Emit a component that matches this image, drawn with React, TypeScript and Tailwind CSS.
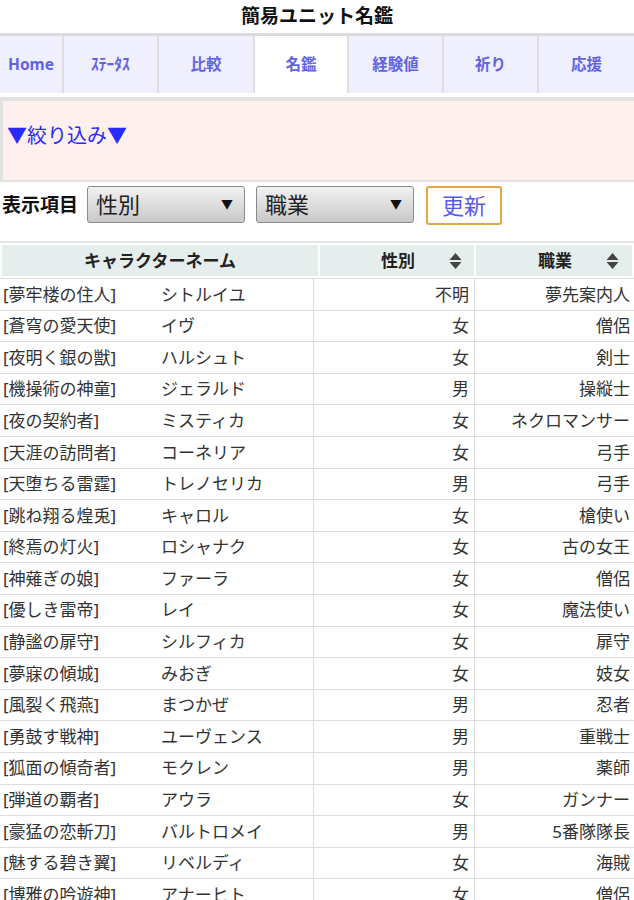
import React from "react";

const tabs = [
  { label: "Home", w: "w-[64px]" },
  { label: "ｽﾃｰﾀｽ", w: "w-[95px]" },
  { label: "比較", w: "w-[96px]" },
  { label: "名鑑", w: "w-[94px]", active: true },
  { label: "経験値", w: "w-[95px]" },
  { label: "祈り", w: "w-[95px]" },
  { label: "応援", w: "flex-1" },
];

const rows: [string, string, string, string][] = [
  ["[夢牢楼の住人]", "シトルイユ", "不明", "夢先案内人"],
  ["[蒼穹の愛天使]", "イヴ", "女", "僧侶"],
  ["[夜明く銀の獣]", "ハルシュト", "女", "剣士"],
  ["[機操術の神童]", "ジェラルド", "男", "操縦士"],
  ["[夜の契約者]", "ミスティカ", "女", "ネクロマンサー"],
  ["[天涯の訪問者]", "コーネリア", "女", "弓手"],
  ["[天堕ちる雷霆]", "トレノセリカ", "男", "弓手"],
  ["[跳ね翔る煌兎]", "キャロル", "女", "槍使い"],
  ["[終焉の灯火]", "ロシャナク", "女", "古の女王"],
  ["[神薙ぎの娘]", "ファーラ", "女", "僧侶"],
  ["[優しき雷帝]", "レイ", "女", "魔法使い"],
  ["[静謐の扉守]", "シルフィカ", "女", "扉守"],
  ["[夢寐の傾城]", "みおぎ", "女", "妓女"],
  ["[風裂く飛燕]", "まつかぜ", "男", "忍者"],
  ["[勇鼓す戦神]", "ユーヴェンス", "男", "重戦士"],
  ["[狐面の傾奇者]", "モクレン", "男", "薬師"],
  ["[弾道の覇者]", "アウラ", "女", "ガンナー"],
  ["[豪猛の恋斬刀]", "バルトロメイ", "男", "5番隊隊長"],
  ["[魅する碧き翼]", "リベルディ", "女", "海賊"],
  ["[博雅の吟遊神]", "アナーヒト", "女", "僧侶"],
];

const SortIcon = () => (
  <svg width="13" height="18" viewBox="0 0 13 18" className="shrink-0">
    <path d="M6.5 1 L12.5 8 L0.5 8 Z" fill="#444" />
    <path d="M6.5 17 L12.5 10 L0.5 10 Z" fill="#444" />
  </svg>
);

const Select = ({ value }: { value: string }) => (
  <div className="h-[37px] w-[158px] rounded-[3px] border border-[#8a8a8a] bg-gradient-to-b from-[#f2f2f2] to-[#c8c8c8] flex items-center justify-between pl-[8px] pr-[11px]">
    <span className="text-[22px] text-[#222]">{value}</span>
    <span className="text-[12px] text-[#111]">▼</span>
  </div>
);

export default function App() {
  return (
    <div className="w-[634px] bg-white font-['Noto_Sans','Noto_Sans_CJK_JP',sans-serif] text-[#222] overflow-hidden">
      <h1 className="h-[33px] flex items-center justify-center text-[19px] font-bold text-[#111]">
        簡易ユニット名鑑
      </h1>

      <nav className="flex border-t-[3px] border-[#dcdcdc] h-[64px] pb-[4px]">
        {tabs.map((t) => (
          <div
            key={t.label}
            className={`${t.w} flex items-center justify-center border-r-2 border-[#dedede] last:border-r-0 text-[15.5px] font-bold text-[#6262e6] ${
              t.active ? "bg-white" : "bg-[#efeffd]"
            }`}
          >
            {t.label}
          </div>
        ))}
      </nav>

      <div className="h-[85px] border-t-[4px] border-l-[3px] border-b-2 border-[#e2e2e2] bg-[#fff0f0] flex items-center pl-[4px] pb-[12px]">
        <span className="font-['Noto_Sans_CJK_JP',sans-serif] text-[20px] text-[#2a2aff]">▼絞り込み▼</span>
      </div>

      <div className="h-[61px] flex items-start pt-[4px] border-b-2 border-[#e4e4e4]">
        <span className="text-[19px] font-bold text-[#111] pl-[2px] mr-[9px] mt-[5px]">表示項目</span>
        <Select value="性別" />
        <div className="w-[11px]" />
        <Select value="職業" />
        <button className="ml-[12px] h-[39px] w-[76px] rounded-[3px] border-2 border-[#e2a64a] bg-white text-[22px] text-[#5a5aea] flex items-center justify-center">
          更新
        </button>
      </div>

      <div className="grid grid-cols-[316px_154px_1fr] gap-[2px] px-[2px] pt-[2px]">
        <div className="h-[31px] bg-[#e6eded] flex items-center justify-center text-[17px] font-bold text-[#222]">
          キャラクターネーム
        </div>
        <div className="h-[31px] bg-[#e6eded] flex items-center justify-end gap-[34px] pr-[12px] text-[17px] font-bold text-[#222]">
          <span>性別</span>
          <SortIcon />
        </div>
        <div className="h-[31px] bg-[#e6eded] flex items-center justify-end gap-[34px] pr-[13px] text-[17px] font-bold text-[#222]">
          <span>職業</span>
          <SortIcon />
        </div>
      </div>

      <div className="mt-[2px] border-t border-[#dddddd]">
        {rows.map((r, i) => (
          <div
            key={i}
            className="h-[31.6px] grid grid-cols-[314px_161px_1fr] border-b border-[#dddddd] text-[17px] text-[#333]"
          >
            <div className="flex items-center border-r border-[#dddddd] whitespace-nowrap overflow-hidden">
              <span className="w-[161px] pl-[3px] shrink-0">{r[0]}</span>
              <span>{r[1]}</span>
            </div>
            <div className="flex items-center justify-end pr-[5px] border-r border-[#dddddd]">
              {r[2]}
            </div>
            <div className="flex items-center justify-end pr-[4px] whitespace-nowrap">{r[3]}</div>
          </div>
        ))}
      </div>
    </div>
  );
}
